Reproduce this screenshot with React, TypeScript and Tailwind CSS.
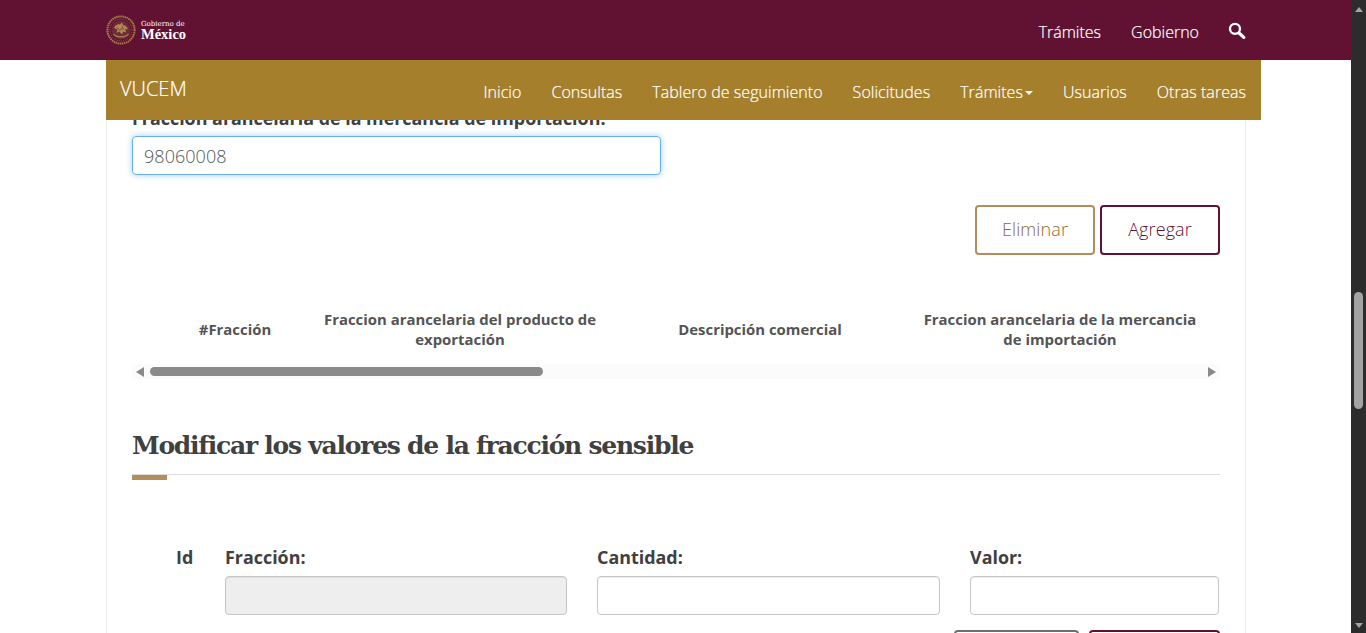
import React from 'react';

const topLinks = ['Trámites', 'Gobierno'];
const navLinks = ['Inicio', 'Consultas', 'Tablero de seguimiento', 'Solicitudes', 'Trámites', 'Usuarios', 'Otras tareas'];

const Seal = () => (
  <svg width="30" height="30" viewBox="0 0 30 30" fill="none">
    <circle cx="15" cy="15" r="13.6" stroke="#a57c48" strokeWidth="2" strokeDasharray="1.5 0.6" />
    <circle cx="15" cy="15" r="11" stroke="#8f6440" strokeWidth="1" strokeDasharray="1 1" />
    <circle cx="15" cy="15" r="9.5" fill="#6d2a38" />
    <path d="M8 13c1.8-3.2 4-4.2 6-3.4l2-2.4 1.1 3c2.4 0 4.2 1.8 4.9 4.4l-2.8-.9.9 3.9-3-1.1-.9 3.1-2.8-2.8-3 .9 1.1-3.1z" fill="#b08a52" />
    <path d="M7.5 19c3.2 3.8 11.8 3.8 15 0" stroke="#a57c48" strokeWidth="1.5" />
    <path d="M10.5 12.5l3 2M13 16.5l3-3.5M16 11l1.5 4" stroke="#6d2a38" strokeWidth="0.7" />
  </svg>
);

const SearchGlyph = () => (
  <svg width="18" height="17" viewBox="0 0 18 17" fill="none" stroke="white">
    <circle cx="7" cy="6.8" r="5" strokeWidth="2.3" />
    <path d="M11 11l4.8 4.4" strokeWidth="3.2" strokeLinecap="round" />
  </svg>
);

const Field = ({ label, width, disabled }: { label: string; width: string; disabled?: boolean }) => (
  <div className={`flex flex-col gap-[7px] ${width}`}>
    <label className="text-[17.9px] leading-[24px] font-bold text-[#404041]">{label}</label>
    <div className={`h-[39px] rounded border border-[#c6c6c6] shadow-[inset_0_1px_1px_rgba(0,0,0,0.075)] ${disabled ? 'bg-[#eeeeee]' : 'bg-white'}`} />
  </div>
);

export default function App() {
  return (
    <div className="flex h-[633px] w-[1366px] overflow-hidden bg-white font-['Open_Sans',sans-serif]">
      <div className="flex w-[1351px] flex-col">
        <header className="flex h-[60px] shrink-0 items-center justify-between bg-[#611232] pl-[106px] pr-[105px]">
          <div className="flex items-center gap-[5px]">
            <Seal />
            <div className="flex flex-col text-white">
              <span className="font-['DejaVu_Serif',serif] text-[7px] leading-[8px]">Gobierno de</span>
              <span className="font-['Liberation_Serif',serif] text-[14.5px] leading-[12px] font-bold">México</span>
            </div>
          </div>
          <div className="mt-[3px] flex items-center gap-[30px] text-[16px] font-light text-white [-webkit-text-stroke:0.2px_white]">
            {topLinks.map(link => (
              <a key={link}>{link}</a>
            ))}
            <span className="mb-[3px] -ml-px flex"><SearchGlyph /></span>
          </div>
        </header>

        <nav className="ml-[106px] flex h-[60px] w-[1155px] shrink-0 items-center justify-between bg-[#a57f2c] pl-[14px] pr-[15px] text-white">
          <span className="mb-[3px] text-[20px] font-light [-webkit-text-stroke:0.2px_white]">VUCEM</span>
          <div className="mt-[4px] flex items-center gap-[30px] text-[16px] font-light tracking-[0.04px] [-webkit-text-stroke:0.2px_white]">
            {navLinks.map(link => (
              <a key={link} className="flex items-center">
                {link}
                {link === 'Trámites' && <span className="ml-[2px] mt-[2px] border-x-[4px] border-t-[4px] border-x-transparent border-t-white" />}
              </a>
            ))}
          </div>
        </nav>

        <main className="ml-[106px] w-[1140px] flex-1 overflow-hidden border-x border-[#eeeeee] pl-[25px] pr-[25px]">
          <label className="-mt-[14px] block text-[17.9px] leading-[24px] font-bold text-[#404041]">
            Fracción arancelaria de la mercancía de importación:
          </label>
          <div className="mt-[6px] flex h-[39px] w-[529px] items-center rounded border border-[#66afe9] pl-[11px] pt-[2px] text-[18px] font-light tracking-[0.05px] text-[#555555] shadow-[0_0_6px_rgba(102,175,233,0.6)]">
            98060008
          </div>

          <div className="mt-[30px] flex justify-end gap-[5px] text-[18px] font-light tracking-[0.1px]">
            <button className="h-[50px] w-[120px] rounded border-2 border-[#b38e5d] pb-[2px] text-[#8a6c38]">Eliminar</button>
            <button className="h-[50px] w-[120px] rounded border-2 border-[#611232] pb-[2px] text-[#611232]">Agregar</button>
          </div>

          <div className="mt-[39px] flex h-[70px] w-[1088px] items-center text-center text-[14.9px] leading-[20px] font-bold text-[#545454]">
            <div className="ml-[28px] w-[150px]">#Fracción</div>
            <div className="w-[300px] px-[10px]">Fraccion arancelaria del producto de exportación</div>
            <div className="w-[300px]">Descripción comercial</div>
            <div className="w-[300px] px-[10px]">Fraccion arancelaria de la mercancia de importación</div>
          </div>

          <div className="flex h-[15px] w-[1088px] items-center bg-[#fbfbfb] pl-[4px]">
            <span className="border-y-[5px] border-r-[8px] border-y-transparent border-r-[#8a8a8a]" />
            <div className="ml-[6px] h-[9px] w-[393px] rounded-full bg-[#8a8a8a]" />
            <span className="ml-auto mr-[4px] border-y-[5px] border-l-[8px] border-y-transparent border-l-[#8a8a8a]" />
          </div>

          <h2 className="mt-[49px] font-['DejaVu_Serif',serif] text-[25px] leading-[36px] font-bold tracking-[-1.25px] text-[#404041]">
            Modificar los valores de la fracción sensible
          </h2>
          <div className="mt-[10px] h-px w-[1088px] bg-[#dddddd]" />
          <div className="h-[5px] w-[35px] bg-[#b38e5d]" />

          <div className="mt-[65px] flex w-[1088px]">
            <label className="ml-[44px] w-[49px] text-[17.9px] leading-[24px] font-bold text-[#404041]">Id</label>
            <div className="flex gap-[30px]">
              <Field label="Fracción:" width="w-[342px]" disabled />
              <Field label="Cantidad:" width="w-[343px]" />
              <Field label="Valor:" width="w-[249px]" />
            </div>
          </div>

          <div className="mt-[15px] flex w-[1088px] justify-end gap-[10px]">
            <div className="h-[40px] w-[125px] rounded border-2 border-[#6f6f6f]" />
            <div className="h-[40px] w-[131px] rounded border-2 border-[#611232]" />
          </div>
        </main>
      </div>

      <aside className="flex w-[15px] shrink-0 flex-col items-center bg-[#2c2c2c]">
        <span className="mt-[7px] border-x-[4px] border-b-[5px] border-x-transparent border-b-[#a3a3a3]" />
        <div className="mt-[280px] h-[117px] w-[9px] rounded-full bg-[#a3a3a3]" />
        <span className="mt-auto mb-[5px] border-x-[4px] border-t-[5px] border-x-transparent border-t-[#a3a3a3]" />
      </aside>
    </div>
  );
}
